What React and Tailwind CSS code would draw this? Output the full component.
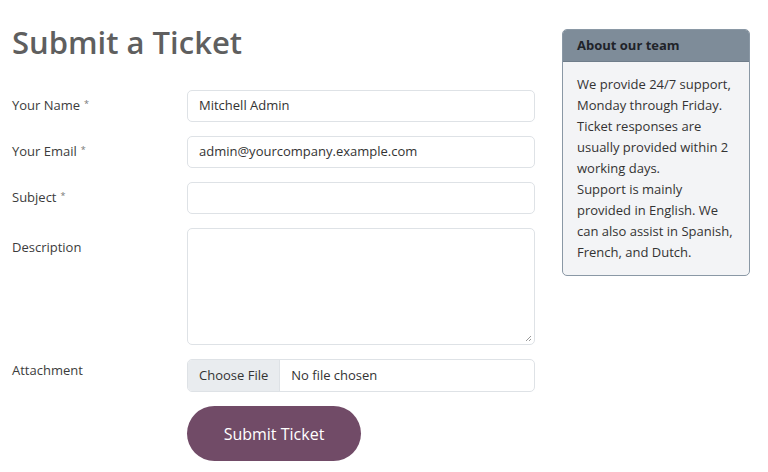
export default function App() {
  const rows = [
    { label: 'Your Name', req: true, value: 'Mitchell Admin' },
    { label: 'Your Email', req: true, value: 'admin@yourcompany.example.com' },
    { label: 'Subject', req: true, value: '' },
  ];

  return (
    <div className="w-[768px] h-[472px] bg-white overflow-hidden flex font-['Open_Sans',sans-serif] text-[#374151]">
      {/* Form column */}
      <div className="w-[535px] pl-3 pt-[22px]">
        <h1 className="text-[31px] leading-[40px] font-semibold text-[#5f5f5f] mb-[28px]">Submit a Ticket</h1>

        <div className="flex flex-col gap-[14px]">
          {rows.map((r) => (
            <div key={r.label} className="flex items-center">
              <label className="w-[175px] shrink-0 text-[13px] text-[#3c3c3c]">
                {r.label}
                {r.req && <span className="text-[9px] text-[#777] ml-1 align-[3px]">*</span>}
              </label>
              <div className="flex-1 h-[32px] border border-[#dee2e6] rounded-[5px] px-[11px] flex items-center text-[13px] text-[#333]">
                {r.value}
              </div>
            </div>
          ))}

          <div className="flex items-start">
            <label className="w-[175px] shrink-0 text-[13px] text-[#3c3c3c] pt-[10px]">Description</label>
            <div className="flex-1 h-[117px] border border-[#dee2e6] rounded-[5px] relative">
              <svg className="absolute right-[2px] bottom-[2px]" width="7" height="7" viewBox="0 0 7 7">
                <path d="M6 1 L1 6 M6 4 L4 6" stroke="#999" strokeWidth="1" />
              </svg>
            </div>
          </div>

          <div className="flex items-start">
            <label className="w-[175px] shrink-0 text-[13px] text-[#3c3c3c] pt-[2px]">Attachment</label>
            <div className="flex-1 h-[33px] border border-[#dee2e6] rounded-[5px] flex overflow-hidden text-[13px] text-[#333]">
              <div className="bg-[#e9ecef] border-r border-[#dee2e6] px-[11px] flex items-center">Choose File</div>
              <div className="px-[11px] flex items-center">No file chosen</div>
            </div>
          </div>

          <div className="flex">
            <div className="w-[175px] shrink-0" />
            <button className="w-[174px] h-[55px] rounded-full bg-[#714b67] text-white text-[16px]">Submit Ticket</button>
          </div>
        </div>
      </div>

      {/* Sidebar */}
      <div className="pl-[27px] pt-[29px]">
        <div className="w-[188px] border border-[#8a98a5] rounded-[5px] overflow-hidden bg-[#f3f4f6]">
          <div className="h-[32px] bg-[#7e8c99] border-b border-[#6f7d8a] px-[14px] flex items-center text-[13px] font-bold text-[#1f2329]">
            About our team
          </div>
          <div className="px-[14px] pt-[12px] pb-[12px] text-[13px] leading-[21px] text-[#333]">
            We provide 24/7 support, Monday through Friday. Ticket responses are usually provided within 2 working days.
            <br />
            Support is mainly provided in English. We can also assist in Spanish, French, and Dutch.
          </div>
        </div>
      </div>
    </div>
  );
}
